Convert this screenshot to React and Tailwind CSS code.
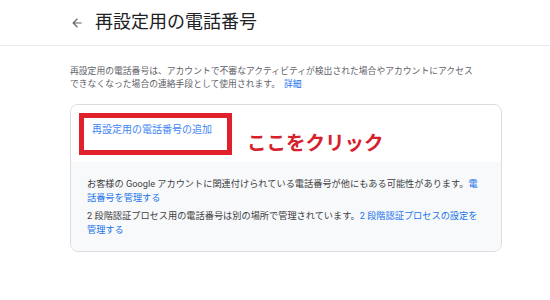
export default function App() {
  return (
    <div className="w-[550px] h-[300px] bg-white overflow-hidden font-['Roboto','Noto_Sans_CJK_JP',sans-serif]">
      <div className="h-[46px] border-b border-[#e8eaed] flex items-center pl-[70px]">
        <svg width="14" height="14" viewBox="0 0 24 24" className="text-[#5f6368]">
          <path d="M20 11H7.83l5.59-5.59L12 4l-8 8 8 8 1.41-1.41L7.83 13H20v-2z" fill="currentColor" />
        </svg>
        <div className="ml-[11px] text-[18px] leading-none text-[#202124] mt-[-2px]">再設定用の電話番号</div>
      </div>
      <div className="pl-[70px] w-[480px] pt-[19px] text-[8.8px] leading-[12.5px] text-[#5f6368]">
        再設定用の電話番号は、アカウントで不審なアクティビティが検出された場合やアカウントにアクセスできなくなった場合の連絡手段として使用されます。<span className="ml-[4px] text-[#1a73e8]">詳細</span>
      </div>
      <div className="ml-[70px] mt-[14px] w-[432px] border border-[#dadce0] rounded-[8px] overflow-hidden">
        <div className="relative h-[57px] bg-white">
          <div className="pl-[21px] pt-[19px] text-[10px] leading-[12px] text-[#4285f4]">再設定用の電話番号の追加</div>
          <div className="absolute left-[8px] top-[8px] w-[153px] h-[42px] border-[5px] border-[#e0202a]"></div>
          <div className="absolute left-[176px] top-[29px] text-[19.5px] leading-[20px] font-bold text-[#d7202c]">ここをクリック</div>
        </div>
        <div className="bg-[#f8f9fa] pl-[16px] pr-[18px] pt-[15px] pb-[14px] text-[9.2px] leading-[14px] text-[#3c4043]">
          <p>お客様の Google アカウントに関連付けられている電話番号が他にもある可能性があります。<span className="text-[#1a73e8]">電話番号を管理する</span></p>
          <p className="mt-[4px]">2 段階認証プロセス用の電話番号は別の場所で管理されています。<span className="text-[#1a73e8]">2 段階認証プロセスの設定を管理する</span></p>
        </div>
      </div>
    </div>
  );
}
